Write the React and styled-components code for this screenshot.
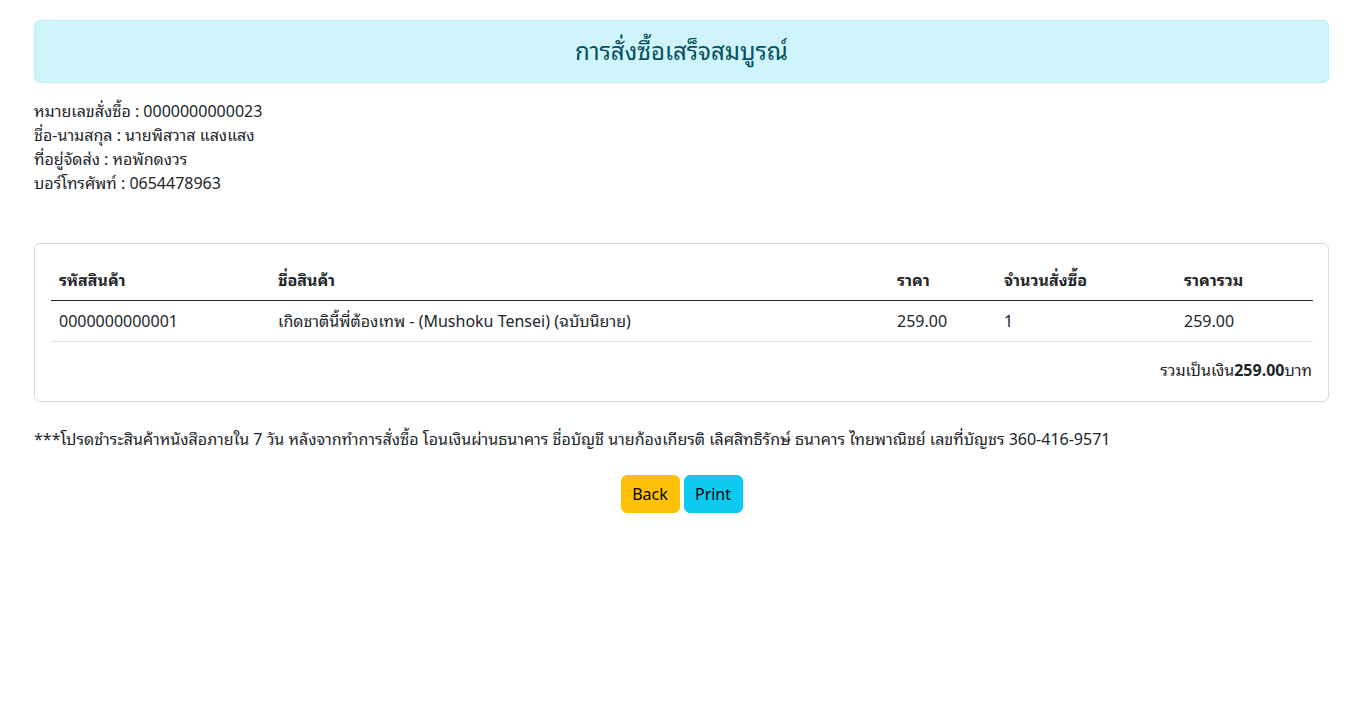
import React from 'react';
import styled, { createGlobalStyle } from 'styled-components';

const GlobalStyle = createGlobalStyle`
    body {
        margin: 0;
        background: #fff;
        color: #212529;
        font-family: "Noto Sans", "Noto Sans Thai Looped", "Noto Sans Thai", "Open Sans", sans-serif;
        font-size: 16px;
        line-height: 1.5;
    }
`;

const Page = styled.div`
    padding: 20px 28px 40px 34px;
`;

const Alert = styled.div`
    background-color: #cff4fc;
    border: 1px solid #b6effb;
    border-radius: 6px;
    color: #055160;
    padding: 16px;
    margin-bottom: 16px;
    text-align: center;
`;

const AlertTitle = styled.h4`
    margin: 0;
    font-size: 24px;
    font-weight: 400;
    line-height: 28.8px;
`;

const InfoLine = styled.div`
    line-height: 24px;
`;

const Info = styled.div`
    margin-bottom: 48px;
`;

const Card = styled.div`
    border: 1px solid rgba(0, 0, 0, 0.15);
    border-radius: 6px;
    padding: 16px;
`;

const Table = styled.table`
    width: 100%;
    table-layout: fixed;
    border-collapse: collapse;
    margin-bottom: 16px;
`;

const Th = styled.th`
    text-align: left;
    font-weight: 700;
    padding: 8px;
    line-height: 24px;
    border-bottom: 1px solid #212529;
    width: ${p => p.w - 16}px;
`;

const Td = styled.td`
    padding: 8px;
    line-height: 24px;
    border-bottom: 1px solid #dee2e6;
`;

const Total = styled.div`
    text-align: right;
    line-height: 24px;
    margin-bottom: 3px;

    b {
        font-weight: 700;
    }
`;

const Note = styled.p`
    margin: 25px 0 24px;
    line-height: 24px;
`;

const Actions = styled.div`
    display: flex;
    justify-content: center;
    gap: 4px;
`;

const Button = styled.button`
    font-family: inherit;
    font-size: 16px;
    line-height: 24px;
    padding: 6px 0;
    border: 1px solid ${p => p.bg};
    border-radius: 6px;
    background-color: ${p => p.bg};
    color: #000;
    cursor: pointer;
    width: 59px;
`;

const columns = [
    { label: 'รหัสสินค้า', w: 219 },
    { label: 'ชื่อสินค้า', w: 619 },
    { label: 'ราคา', w: 107 },
    { label: 'จำนวนสั่งซื้อ', w: 180 },
    { label: 'ราคารวม', w: 137 },
];

const items = [
    { id: '0000000000001', name: 'เกิดชาตินี้พี่ต้องเทพ - (Mushoku Tensei) (ฉบับนิยาย)', price: '259.00', qty: 1, sum: '259.00' },
];

const App = () => {
    return (
        <Page>
            <GlobalStyle />
            <Alert>
                <AlertTitle>การสั่งซื้อเสร็จสมบูรณ์</AlertTitle>
            </Alert>
            <Info>
                <InfoLine>หมายเลขสั่งซื้อ : 0000000000023</InfoLine>
                <InfoLine>ชื่อ-นามสกุล : นายพิสวาส แสงแสง</InfoLine>
                <InfoLine>ที่อยู่จัดส่ง : หอพักดงวร</InfoLine>
                <InfoLine>บอร์โทรศัพท์ : 0654478963</InfoLine>
            </Info>
            <Card>
                <Table>
                    <thead>
                        <tr>
                            {columns.map(c => <Th key={c.label} w={c.w}>{c.label}</Th>)}
                        </tr>
                    </thead>
                    <tbody>
                        {items.map(it => (
                            <tr key={it.id}>
                                <Td>{it.id}</Td>
                                <Td>{it.name}</Td>
                                <Td>{it.price}</Td>
                                <Td>{it.qty}</Td>
                                <Td>{it.sum}</Td>
                            </tr>
                        ))}
                    </tbody>
                </Table>
                <Total>รวมเป็นเงิน<b>259.00</b>บาท</Total>
            </Card>
            <Note>***โปรดชำระสินค้าหนังสือภายใน 7 วัน หลังจากทำการสั่งซื้อ โอนเงินผ่านธนาคาร ชื่อบัญชี นายก้องเกียรติ เลิศสิทธิรักษ์ ธนาคาร ไทยพาณิชย์ เลขที่บัญชร 360-416-9571</Note>
            <Actions>
                <Button bg="#ffc107">Back</Button>
                <Button bg="#0dcaf0">Print</Button>
            </Actions>
        </Page>
    );
};

export default App;
